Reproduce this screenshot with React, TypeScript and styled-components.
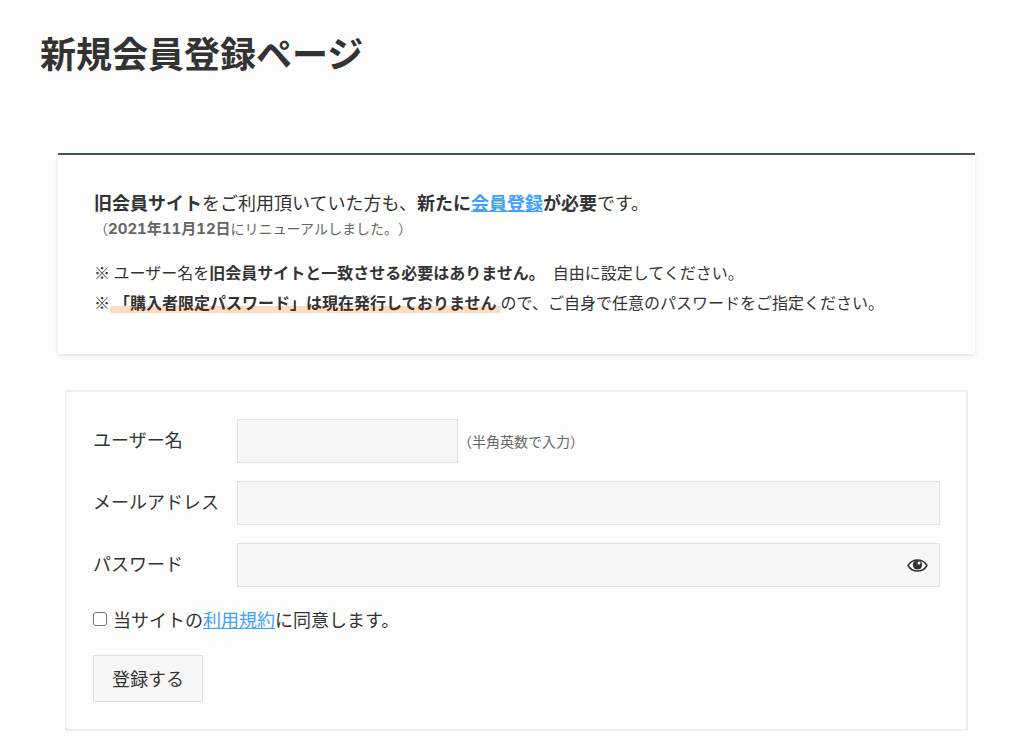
import React from "react";
import styled, { createGlobalStyle } from "styled-components";

const GlobalStyle = createGlobalStyle`
  *, *::before, *::after { box-sizing: border-box; }
  body {
    margin: 0;
    background: #fdfdfd;
    color: #333;
    font-family: "Noto Sans CJK JP", sans-serif;
    font-size: 18px;
    line-height: 32px;
    text-spacing-trim: space-all;
  }
`;

const Page = styled.main`
  padding: 25px 49px 25px 58px;
`;

const Title = styled.h1`
  margin: 0 0 74px -18px;
  font-size: 36px;
  line-height: 54px;
  font-weight: 700;
`;

const Notice = styled.section`
  padding: 31px 36px 19px;
  border-top: 2px solid #455560;
  background: #fff;
  box-shadow: 0 2px 4px rgba(0, 0, 0, 0.1);
`;

const Paragraph = styled.p<{ $small?: boolean }>`
  margin: 0 0 18px;
  font-size: ${(p) => (p.$small ? "16px" : "18px")};
  line-height: ${(p) => (p.$small ? "30px" : "32px")};
`;

const Small = styled.small`
  display: block;
  font-size: 14px;
  line-height: 20px;
  color: #666;
`;

const DateText = styled.strong`
  font-family: Inter, "Noto Sans CJK JP", sans-serif;
  font-size: 15px;
  font-variant-numeric: tabular-nums;
`;

const Marker = styled.strong`
  padding: 0 4px;
  background: linear-gradient(transparent 68%, #ffdcc0 68%, #ffdcc0 96%, transparent 96%);
`;

const Link = styled.a`
  color: #3da2ff;
  text-decoration: underline;
`;

const Form = styled.form`
  display: flex;
  flex-direction: column;
  align-items: stretch;
  gap: 18px;
  margin: 36px 7px 0;
  padding: 27px 26px;
  border: 2px solid #eee;
`;

const Row = styled.div`
  display: grid;
  grid-template-columns: 144px 1fr;
  align-items: center;
`;

const Label = styled.label`
  padding-bottom: 4px;
`;

const Field = styled.div`
  display: flex;
  align-items: center;
  position: relative;
`;

const Input = styled.input<{ $short?: boolean }>`
  width: ${(p) => (p.$short ? "221px" : "100%")};
  height: 44px;
  padding: 8px 12px;
  border: 1px solid #e2e2e2;
  border-radius: 0;
  background: #f7f7f7;
  color: inherit;
  font: inherit;
`;

const Hint = styled.span`
  font-size: 14px;
  color: #666;
`;

const RevealButton = styled.button`
  position: absolute;
  top: 12px;
  right: 12px;
  display: flex;
  padding: 0;
  border: 0;
  background: none;
  color: #333;
`;

const Agreement = styled.div`
  display: flex;
  align-items: center;
  gap: 6px;
  margin-bottom: 4px;
  line-height: 28px;
`;

const AgreementLabel = styled.label``;

const Checkbox = styled.input`
  appearance: none;
  width: 14px;
  height: 14px;
  margin: 0;
  border: 1px solid #767676;
  border-radius: 3px;
  background: #fff;
  &:checked { background: #3da2ff; }
`;

const SubmitButton = styled.button`
  align-self: flex-start;
  padding: 6px 18px 7px;
  border: 1px solid #e2e2e2;
  background: #f7f7f7;
  color: inherit;
  font: inherit;
`;

const EyeIcon = () => (
  <svg width="21" height="21" viewBox="0 0 21 21" aria-hidden="true">
    <path
      d="M1 10.5C3.3 6.7 6.6 4.9 10.5 4.9S17.7 6.7 20 10.5C17.7 14.3 14.4 16.1 10.5 16.1S3.3 14.3 1 10.5z"
      fill="#fff"
      stroke="currentColor"
      strokeWidth="1.5"
      strokeLinejoin="round"
    />
    <circle cx="10.5" cy="9.9" r="4.7" fill="currentColor" />
    <circle cx="12" cy="8" r="1.5" fill="#fff" />
  </svg>
);

export default function App() {
  return (
    <>
      <GlobalStyle />
      <Page>
        <Title>新規会員登録ページ</Title>
        <Notice>
          <Paragraph>
            <strong>旧会員サイト</strong>をご利用頂いていた方も、
            <strong>
              新たに<Link href="#register">会員登録</Link>が必要
            </strong>
            です。
            <Small>
              （<DateText>2021年11月12日</DateText>にリニューアルしました。）
            </Small>
          </Paragraph>
          <Paragraph $small>
            ※ ユーザー名を<strong>旧会員サイトと一致させる必要はありません。</strong>&ensp;自由に設定してください。
            <br />※<Marker>「購入者限定パスワード」は現在発行しておりません</Marker>
            ので、ご自身で任意のパスワードをご指定ください。
          </Paragraph>
        </Notice>
        <Form id="register" onSubmit={(e) => e.preventDefault()}>
          <Row>
            <Label htmlFor="username">ユーザー名</Label>
            <Field>
              <Input $short id="username" type="text" />
              <Hint>（半角英数で入力）</Hint>
            </Field>
          </Row>
          <Row>
            <Label htmlFor="email">メールアドレス</Label>
            <Field>
              <Input id="email" type="email" />
            </Field>
          </Row>
          <Row>
            <Label htmlFor="password">パスワード</Label>
            <Field>
              <Input id="password" type="password" />
              <RevealButton type="button" aria-label="パスワードを表示">
                <EyeIcon />
              </RevealButton>
            </Field>
          </Row>
          <Agreement>
            <Checkbox id="agree" type="checkbox" />
            <AgreementLabel htmlFor="agree">
              当サイトの<Link href="#terms">利用規約</Link>に同意します。
            </AgreementLabel>
          </Agreement>
          <SubmitButton type="submit">登録する</SubmitButton>
        </Form>
      </Page>
    </>
  );
}
